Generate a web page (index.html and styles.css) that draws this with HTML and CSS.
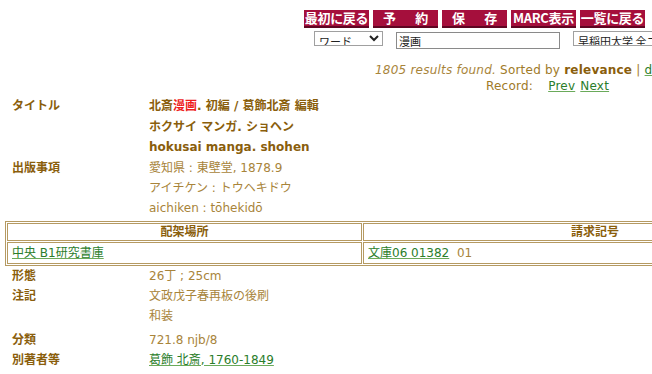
FILE: index.html
```html
<!DOCTYPE html>
<html lang="ja">
<head>
<meta charset="utf-8">
<title>WINE 詳細</title>
<link rel="stylesheet" href="styles.css">
</head>
<body>
<div class="top">
  <div class="buttons">
    <span class="btn">最初に戻る</span>
    <span class="btn spread"><span>予</span><span>約</span></span>
    <span class="btn spread"><span>保</span><span>存</span></span>
    <span class="btn">MARC表示</span>
    <span class="btn">一覧に戻る</span>
  </div>
  <div class="search">
    <select class="sel-field"><option>ワード</option></select>
    <input class="query" type="text" value="漫画">
    <select class="sel-lib"><option>早稲田大学 全コレクション</option></select>
  </div>
</div>

<div class="status"><em>1805 results found.</em> Sorted by <b>relevance</b> | <a href="#">date</a></div>
<div class="record">Record:&nbsp;&nbsp; <a href="#">Prev</a> <a href="#">Next</a></div>

<div class="detail first">
  <div class="label">タイトル</div>
  <div class="value strong">
    <div class="tline">北斎<span class="hit">漫画</span>. 初編 / 葛飾北斎 編輯</div>
    <div class="tline">ホクサイ マンガ. ショヘン</div>
    <div class="tline">hokusai manga. shohen</div>
  </div>
  <div class="label">出版事項</div>
  <div class="value">
    <div>愛知県 : 東壁堂, 1878.9</div>
    <div>アイチケン : トウヘキドウ</div>
    <div>aichiken : tōhekidō</div>
  </div>
</div>

<table class="holdings">
  <tr>
    <th class="col-loc">配架場所</th>
    <th class="col-call">請求記号</th>
  </tr>
  <tr>
    <td><a href="#">中央 B1研究書庫</a></td>
    <td><a href="#">文庫06 01382</a>&nbsp; 01</td>
  </tr>
</table>

<div class="detail">
  <div class="label">形態</div>
  <div class="value"><div>26丁 ; 25cm</div></div>
  <div class="label">注記</div>
  <div class="value notes">
    <div>文政戊子春再板の後刷</div>
    <div>和装</div>
  </div>
  <div class="label">分類</div>
  <div class="value"><div>721.8 njb/8</div></div>
  <div class="label">別著者等</div>
  <div class="value"><div><a href="#">葛飾 北斎, 1760-1849</a></div></div>
</div>
</body>
</html>
```

FILE: styles.css
```css
html, body {
  overflow: hidden;
}
body {
  margin: 0;
  background: #ffffff;
  color: #a8843a;
  font-family: "DejaVu Sans", "Noto Sans CJK JP", sans-serif;
  font-size: 12px;
}
a {
  color: #2b7d2b;
  text-decoration: underline;
  text-decoration-color: #6aaa5a;
}

/* top toolbar */
.top {
  padding: 10px 0 0 304px;
  width: 700px;
}
.buttons {
  display: flex;
  gap: 4px;
}
.btn {
  width: 65px;
  height: 16px;
  background: #a50f3c;
  border-bottom: 2px solid #5e0622;
  color: #ffffff;
  font-family: "Noto Sans CJK JP", sans-serif;
  font-weight: 700;
  font-size: 13px;
  line-height: 16px;
  display: flex;
  justify-content: center;
  align-items: center;
  white-space: nowrap;
  letter-spacing: -0.3px;
}
.btn.spread {
  justify-content: space-between;
  padding: 0 10px;
  width: 45px;
}
.search {
  display: flex;
  align-items: flex-start;
  margin: 3px 0 0 10px;
}
.sel-field {
  width: 69px;
  height: 15px;
  font-size: 11px;
  font-family: "Noto Sans CJK JP", sans-serif;
  padding: 0;
  border: 1px solid #a0a0a0;
  border-radius: 0;
  background: #fff;
  color: #222;
}
.query {
  width: 158px;
  height: 13px;
  margin: 1px 0 0 13px;
  padding: 1px 2px;
  font-size: 11px;
  font-family: "Noto Sans CJK JP", sans-serif;
  border: 1px solid #8a8a8a;
  color: #222;
}
.sel-lib {
  width: 150px;
  height: 15px;
  margin-left: 13px;
  padding: 0;
  font-size: 11px;
  font-family: "Noto Sans CJK JP", sans-serif;
  border: 1px solid #a0a0a0;
  border-radius: 0;
  background: #fff;
  color: #222;
}

/* status lines */
.status {
  margin-top: 13px;
  padding-left: 375px;
  white-space: nowrap;
  line-height: 16px;
  color: #a07a28;
  letter-spacing: 0.22px;
}
.status em {
  color: #a8843a;
}
.status b {
  color: #8a5e0c;
}
.record {
  padding-left: 486px;
  white-space: nowrap;
  line-height: 16px;
  color: #a07a28;
  letter-spacing: 0.22px;
  word-spacing: 1px;
}

/* detail rows */
.detail {
  display: grid;
  grid-template-columns: 137px 1fr;
  padding-left: 12px;
  line-height: 20px;
}
.detail.first {
  margin-top: 2px;
}
.label {
  font-weight: 700;
  color: #8a5e0c;
}
.value.strong {
  font-weight: 700;
  color: #8a5e0c;
}
.tline {
  line-height: 20.5px;
}
.hit {
  color: #ee1c1c;
}
.notes {
  padding-bottom: 4px;
}

/* holdings table */
.holdings {
  margin: 3px 0 0 5px;
  width: 824px;
  border: 1px solid #b59a62;
  border-spacing: 1px;
}
.holdings th,
.holdings td {
  border: 1px solid #b59a62;
  padding: 0 4px;
}
.holdings th {
  text-align: center;
  font-weight: 700;
  color: #8a5e0c;
  height: 16px;
  line-height: 16px;
}
.holdings td {
  height: 20px;
  line-height: 20px;
  text-align: left;
}
.col-loc {
  width: 345px;
}
```
